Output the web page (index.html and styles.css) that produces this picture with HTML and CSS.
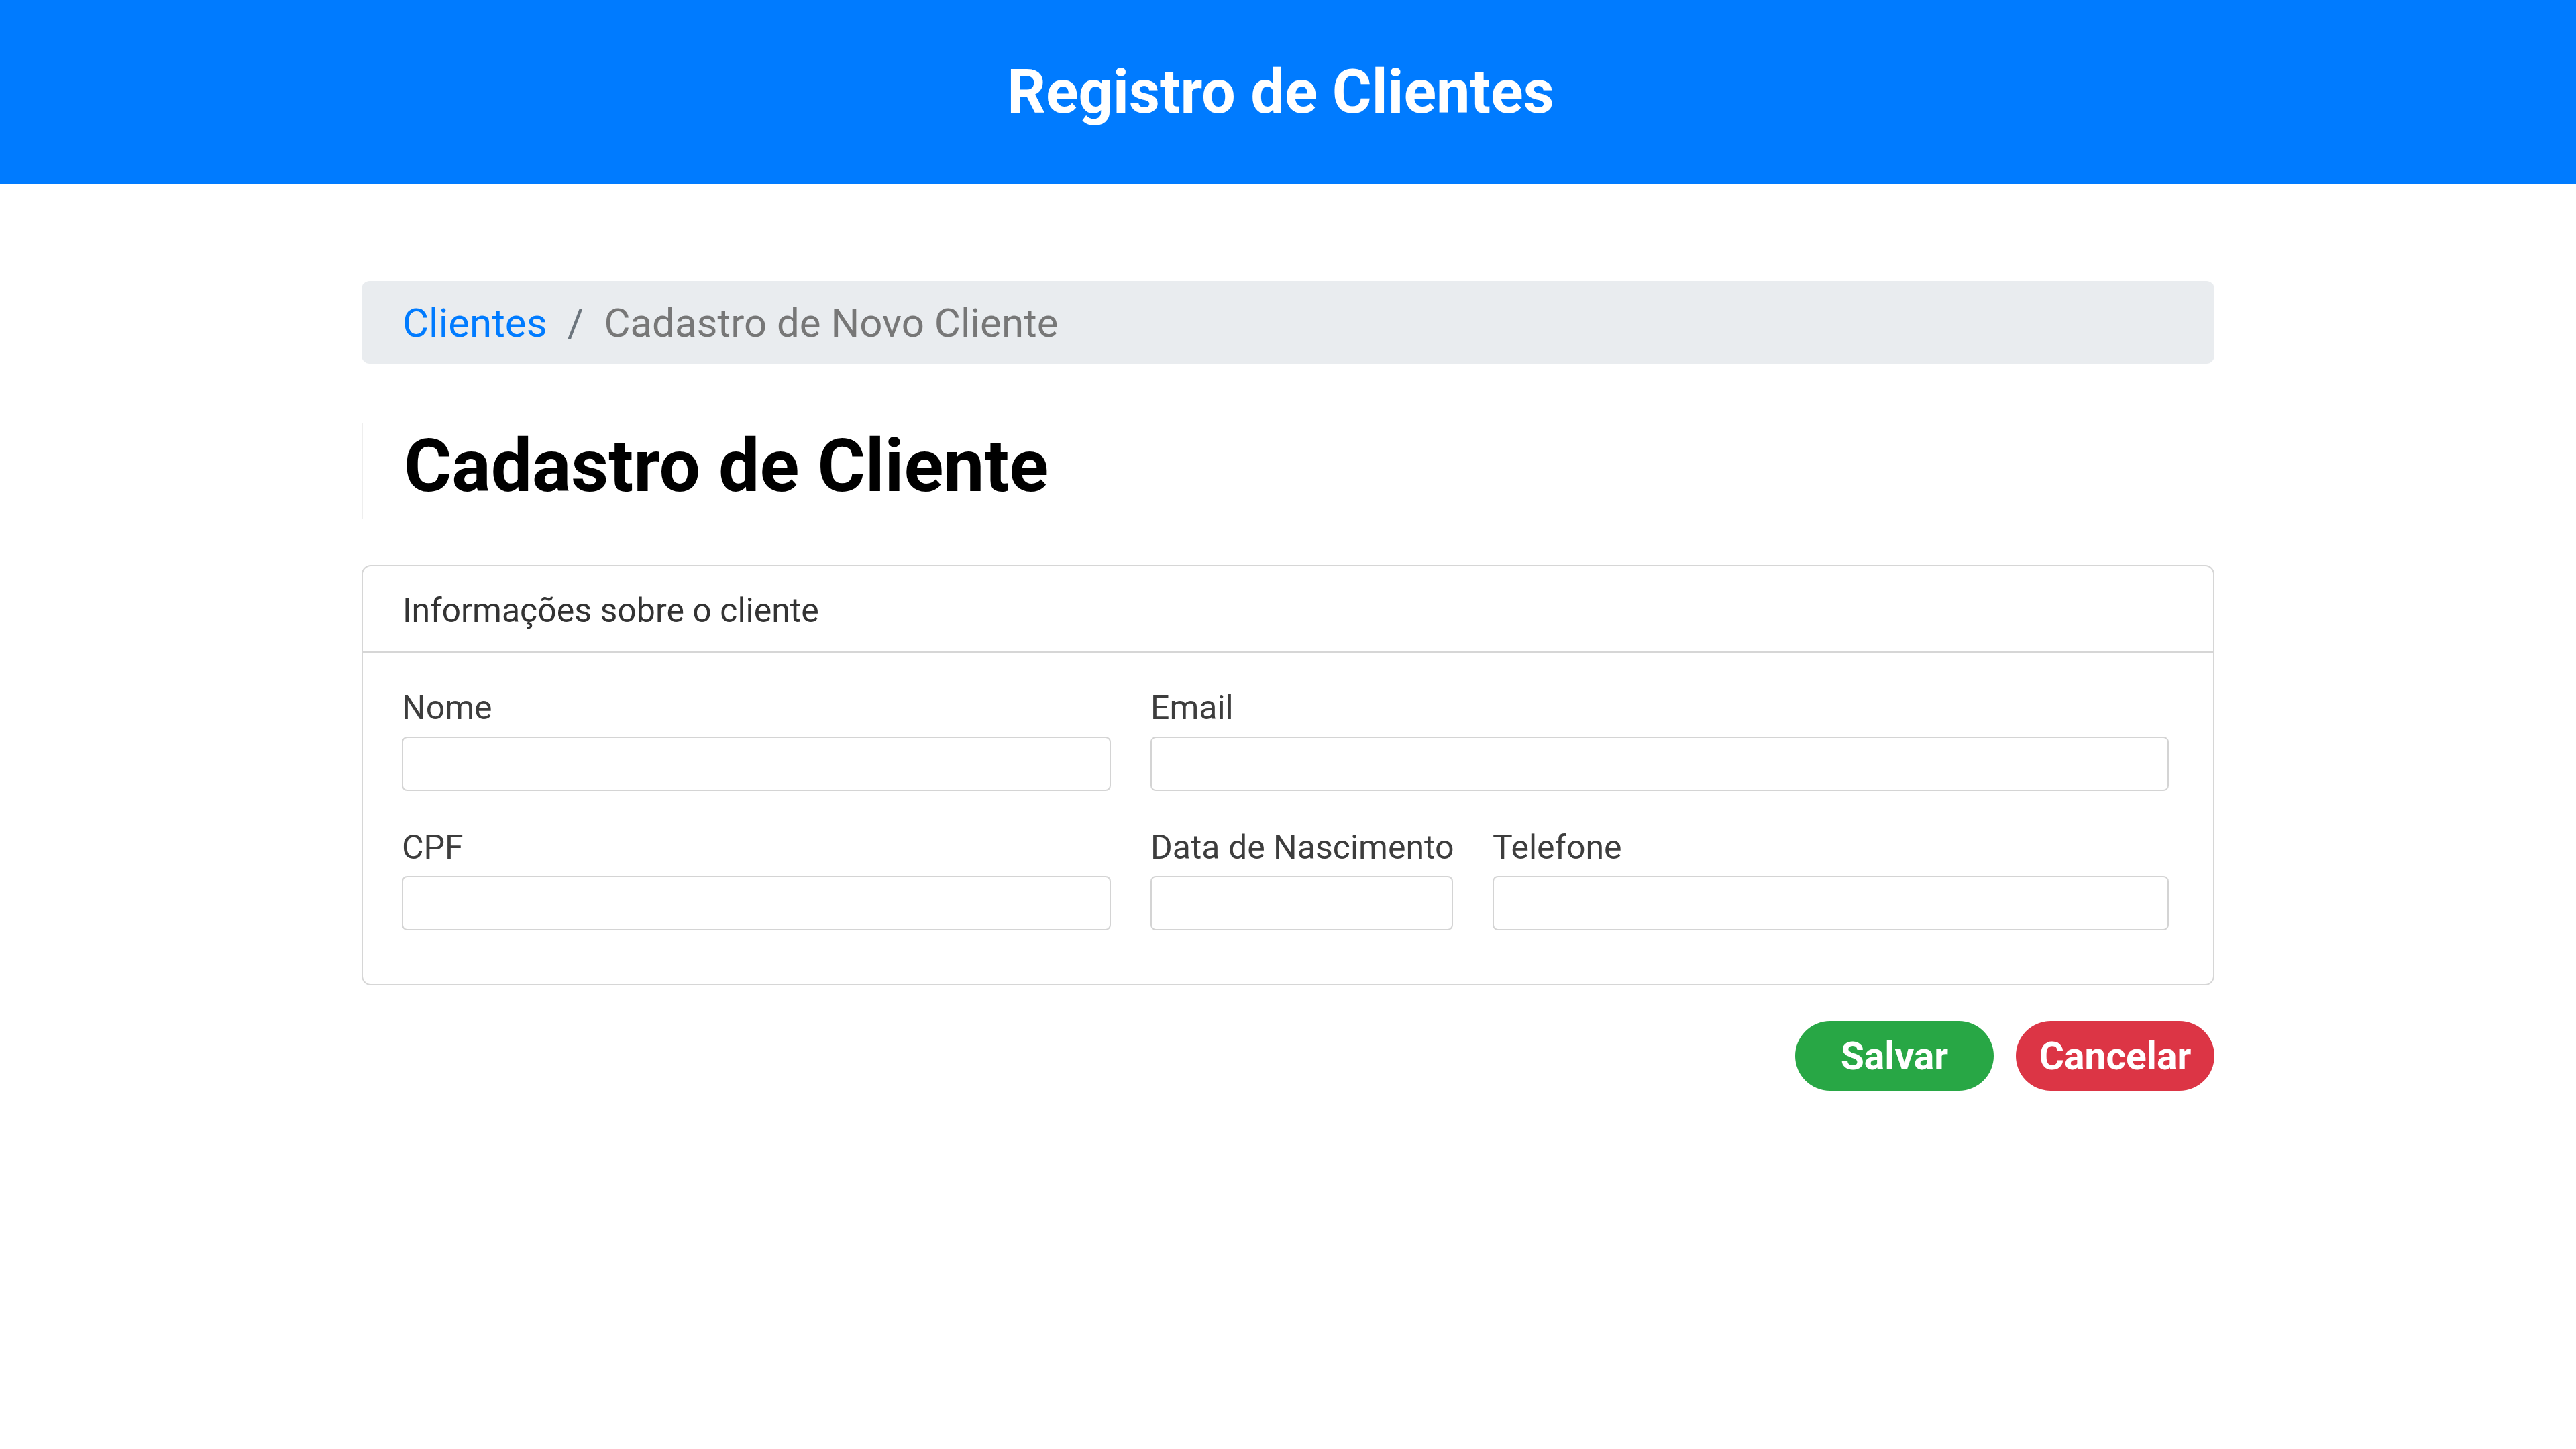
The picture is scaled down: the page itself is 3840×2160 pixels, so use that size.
FILE: index.html
```html
<!DOCTYPE html>
<html lang="pt-BR">
<head>
<meta charset="utf-8">
<title>Registro de Clientes</title>
<link rel="stylesheet" href="styles.css">
</head>
<body>
<header class="topbar">
  <h1 class="topbar-title">Registro de Clientes</h1>
</header>
<main class="container">
  <nav class="breadcrumb">
    <a class="crumb-link" href="#">Clientes</a>
    <span class="crumb-sep">/</span>
    <span class="crumb-active">Cadastro de Novo Cliente</span>
  </nav>
  <div class="page-title">
    <h2>Cadastro de Cliente</h2>
  </div>
  <section class="card">
    <div class="card-header">Informações sobre o cliente</div>
    <div class="card-body">
      <div class="form-row row-a">
        <div class="field">
          <label class="field-label">Nome</label>
          <input class="field-input" type="text">
        </div>
        <div class="field">
          <label class="field-label">Email</label>
          <input class="field-input" type="text">
        </div>
      </div>
      <div class="form-row row-b">
        <div class="field">
          <label class="field-label">CPF</label>
          <input class="field-input" type="text">
        </div>
        <div class="field">
          <label class="field-label">Data de Nascimento</label>
          <input class="field-input" type="text">
        </div>
        <div class="field">
          <label class="field-label">Telefone</label>
          <input class="field-input" type="text">
        </div>
      </div>
    </div>
  </section>
  <div class="actions">
    <button class="btn btn-save">Salvar</button>
    <button class="btn btn-cancel">Cancelar</button>
  </div>
</main>
</body>
</html>
```
FILE: styles.css
```css
* { box-sizing: border-box; }
html, body { margin: 0; padding: 0; background: #fff; }
body { font-family: Roboto, "Liberation Sans", Arial, sans-serif; color: #333; }

.topbar {
  height: 274px;
  background: #007bff;
  display: flex;
  align-items: center;
  justify-content: center;
  padding-right: 22px;
}
.topbar-title {
  margin: 0;
  color: #fff;
  font-size: 90px;
  font-weight: 700;
  line-height: normal;
}

.container {
  width: 2762px;
  margin: 0 auto;
  padding-top: 145px;
}

.breadcrumb {
  background: #e9ecef;
  border-radius: 12px;
  padding: 19px 0 16px 61px;
  font-size: 60px;
  line-height: 88px;
  display: flex;
}
.crumb-link { color: #007bff; text-decoration: none; }
.crumb-sep { color: #6c757d; margin: 0 30px; }
.crumb-active { color: #777; }

.page-title {
  margin-top: 89px;
  border-left: 2px solid #eeeeee;
  padding-left: 61px;
  padding-bottom: 14px;
}
.page-title h2 {
  margin: 0;
  font-size: 109px;
  font-weight: 700;
  line-height: 129px;
  color: #000;
}

.card {
  margin-top: 68px;
  border: 2px solid #d6d6d6;
  border-radius: 14px;
}
.card-header {
  font-size: 50px;
  line-height: 72px;
  padding: 30px 59px 25px;
  color: #333;
  border-bottom: 2px solid #d6d6d6;
}
.card-body {
  padding: 46px 66px 80px 58px;
  display: flex;
  flex-direction: column;
  gap: 48px;
}
.form-row {
  display: grid;
  column-gap: 59px;
}
.row-a { grid-template-columns: 1057px 1fr; }
.row-b { grid-template-columns: 1057px 451px 1fr; }
.field { display: flex; flex-direction: column; }
.field-label {
  font-size: 50px;
  line-height: 72px;
  color: #3d3d3d;
  white-space: nowrap;
  margin-bottom: 7px;
}
.field-input {
  height: 81px;
  width: 100%;
  border: 2px solid #d4d4d4;
  border-radius: 8px;
  background: #fff;
  font-family: inherit;
  font-size: 48px;
}

.actions {
  margin-top: 53px;
  display: flex;
  justify-content: flex-end;
  gap: 33px;
}
.btn {
  width: 296px;
  height: 104px;
  border: none;
  border-radius: 52px;
  color: #fff;
  font-family: Roboto, "Liberation Sans", Arial, sans-serif;
  font-size: 57px;
  font-weight: 700;
  line-height: normal;
  padding: 0;
}
.btn-save { background: #28a745; }
.btn-cancel { background: #dc3545; }
```
